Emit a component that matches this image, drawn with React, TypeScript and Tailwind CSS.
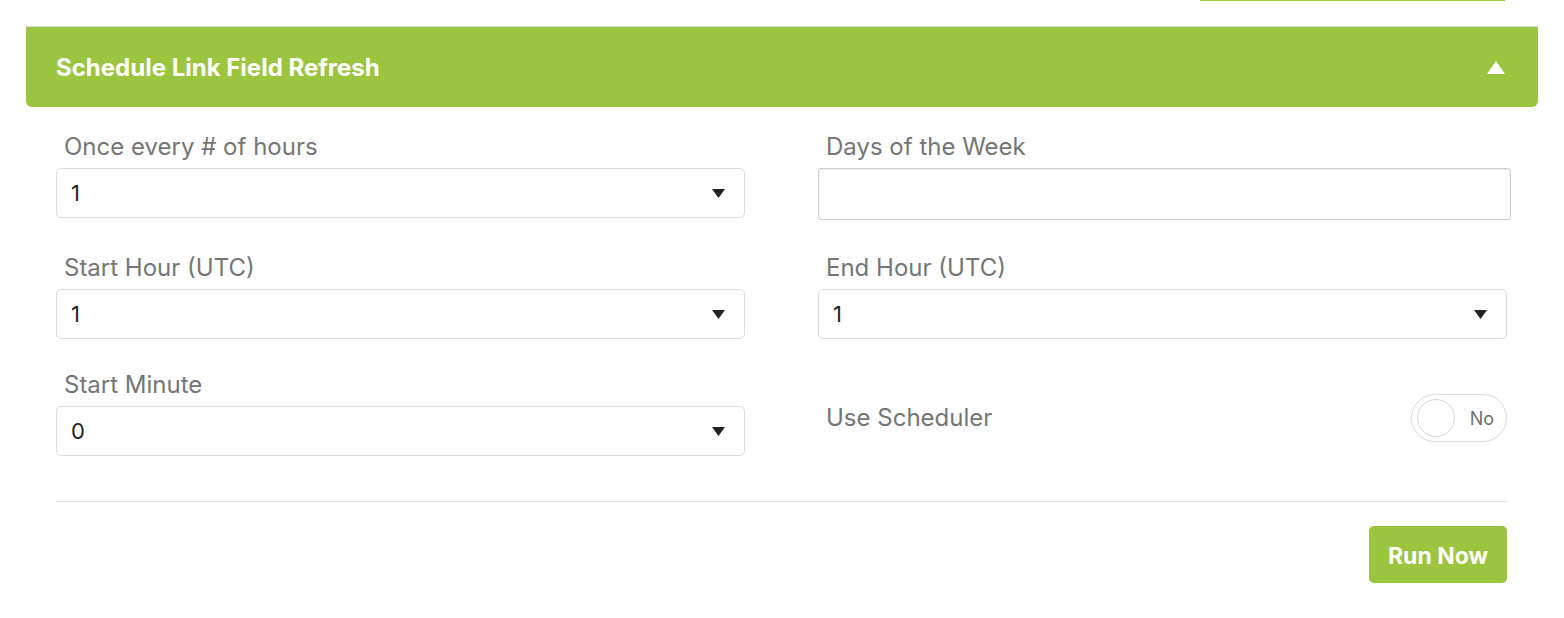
import { useState } from "react";

const font = { fontFamily: 'Inter, "Liberation Sans", Arial, sans-serif' };

type SelectFieldProps = {
  label: string;
  value: string;
};

function Caret() {
  return (
    <svg width="13" height="9" viewBox="0 0 13 9" className="shrink-0">
      <path d="M0 0h13L6.5 9z" fill="#222" />
    </svg>
  );
}

function FieldLabel({ children }: { children: string }) {
  return <label className="h-[26px] pl-2 text-[24px] leading-[26px] text-[#757575]">{children}</label>;
}

function SelectField({ label, value }: SelectFieldProps) {
  return (
    <div className="flex flex-col">
      <FieldLabel>{label}</FieldLabel>
      <div className="mt-2 flex h-[50px] items-center justify-between rounded-[5px] border border-[#dcdcdc] bg-white pl-[14px] pr-[19px]">
        <span className="text-[22px] text-[#222]">{value}</span>
        <Caret />
      </div>
    </div>
  );
}

export default function App() {
  const [open] = useState(true);

  return (
    <div className="min-h-[618px] w-full bg-white" style={font}>
      <div className="flex h-[26px] items-start justify-end pr-[59px]">
        <div className="h-[1px] w-[305px] bg-[#9bc43f]" />
      </div>

      <div className="mx-[26px] border-t border-[#d8dadc]">
        <div className="flex h-[80px] items-center justify-between rounded-b-[6px] bg-[#9bc43f] pl-[30px] pr-[33px]">
          <h2 className="pt-[2px] text-[24px] font-bold text-white">Schedule Link Field Refresh</h2>
          <svg width="18" height="13" viewBox="0 0 18 13">
            <path d={open ? "M9 0L18 13H0z" : "M0 0h18L9 13z"} fill="#fff" />
          </svg>
        </div>

        <div className="pl-[30px] pr-[31px] pt-[27px]">
          <div className="grid grid-cols-2 gap-x-[73px]">
            <SelectField label="Once every # of hours" value="1" />

            <div className="flex flex-col">
              <FieldLabel>Days of the Week</FieldLabel>
              <input
                className="mt-2 mr-[-4px] h-[52px] rounded-[3px] border border-[#c9cdd1] bg-white px-3 text-[22px] shadow-[inset_0_1px_2px_rgba(0,0,0,0.08)] outline-none"
                readOnly
              />
            </div>
          </div>

          <div className="mt-[35px] grid grid-cols-2 gap-x-[73px]">
            <SelectField label="Start Hour (UTC)" value="1" />
            <SelectField label="End Hour (UTC)" value="1" />
          </div>

          <div className="mt-[33px] grid grid-cols-2 gap-x-[73px]">
            <SelectField label="Start Minute" value="0" />

            <div className="flex items-center justify-between pt-[8px]">
              <span className="pl-2 text-[24px] text-[#757575]">Use Scheduler</span>
              <div className="flex h-[48px] w-[96px] items-center rounded-full border border-[#dcdcdc] bg-white pl-[5px] pr-[12px]">
                <div className="h-[38px] w-[38px] rounded-full border border-[#d4d4d4] bg-white" />
                <span className="ml-auto text-[18px] text-[#707070]">No</span>
              </div>
            </div>
          </div>

          <div className="mt-[45px] h-px bg-[#dddddd]" />

          <div className="flex justify-end pt-[24px]">
            <button className="h-[57px] w-[138px] rounded-[5px] bg-[#9bc43f] pt-[3px] text-[23px] font-bold text-white">
              Run Now
            </button>
          </div>
        </div>
      </div>
    </div>
  );
}
